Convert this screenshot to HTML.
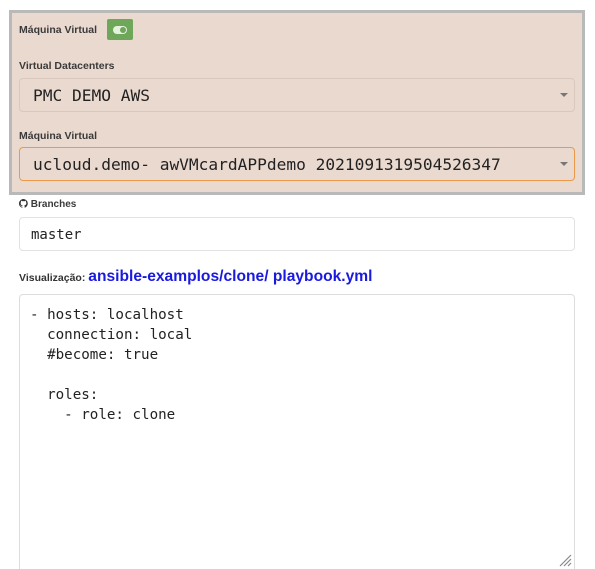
<!DOCTYPE html>
<html><head><meta charset="utf-8"><style>
*{box-sizing:border-box;margin:0;padding:0}
html,body{width:595px;height:569px;overflow:hidden}
body{background:#fff;font-family:"Liberation Sans",sans-serif;position:relative}
.panel{position:absolute;left:9px;top:10px;width:576px;height:185px;background:#ead9cf;border:3px solid #b9b9b9}
.lbl{position:absolute;font-size:10.5px;font-weight:bold;color:#3a3a3a}
.sel{position:absolute;left:19px;width:556px;height:34px;border:1px solid #d9c8bd;border-radius:4px;font-family:"DejaVu Sans Mono",monospace;font-size:16.2px;color:#222;padding-left:13px;line-height:33px}
.sel:after{content:"";position:absolute;right:6px;top:14px;border-left:4px solid transparent;border-right:4px solid transparent;border-top:4px solid #777}
.toggle{position:absolute;left:107px;top:19px;width:26px;height:21px;background:#6ea65a;border-radius:2px}
.toggle i{position:absolute;left:6px;top:7px;width:14px;height:8px;border-radius:4px;background:#e5f0de}
.toggle i:after{content:"";position:absolute;right:1px;top:1px;width:6px;height:6px;border-radius:3px;background:#6ea65a}
.inp{position:absolute;left:19px;top:217px;width:556px;height:34px;border:1px solid #e2e2e2;border-radius:4px;font-family:"DejaVu Sans Mono",monospace;font-size:14px;line-height:34px;padding-left:11px;color:#222}
.ta{position:absolute;left:19px;top:294px;width:556px;height:290px;border:1px solid #ddd;border-radius:4px;font-family:"DejaVu Sans Mono",monospace;font-size:14.2px;line-height:20px;padding:10px 10px;white-space:pre;color:#222}
</style></head><body>
<div class="panel"></div>
<div class="lbl" style="left:19px;top:24px">Máquina Virtual</div>
<div class="toggle"><i></i></div>
<div class="lbl" style="left:19px;top:60px">Virtual Datacenters</div>
<div class="sel" style="top:78px">PMC DEMO AWS</div>
<div class="lbl" style="left:19px;top:130px">Máquina Virtual</div>
<div class="sel" style="top:147px;border-color:#ec9a4a">ucloud.demo- awVMcardAPPdemo 2021091319504526347</div>
<div class="lbl" style="left:19px;top:199px;font-size:10px"><svg width="9" height="9" viewBox="0 0 16 16" style="vertical-align:-1px"><path fill="#333" d="M8 0a8 8 0 0 0-2.5 15.6c.4 0 .5-.2.5-.4v-1.5c-2.2.5-2.7-1-2.7-1-.4-.9-.9-1.2-.9-1.2-.7-.5.1-.5.1-.5.8.1 1.2.8 1.2.8.7 1.3 1.9.9 2.3.7.1-.5.3-.9.5-1.100-1.8-.2-3.6-.9-3.6-4 0-.9.3-1.6.8-2.1-.1-.2-.4-1 .1-2.1 0 0 .7-.2 2.2.8a7.5 7.5 0 0 1 4 0c1.5-1 2.2-.8 2.2-.8.4 1.1.2 1.9.1 2.1.5.6.8 1.3.8 2.1 0 3.1-1.900 3.7-3.6 3.9.3.3.5.8.5 1.5v2.2c0 .2.1.5.6.4A8 8 0 0 0 8 0z"/></svg> Branches</div>
<div class="inp">master</div>
<div style="position:absolute;left:19px;top:268px;font-size:10.5px;font-weight:bold;color:#333;white-space:nowrap">Visualização: <span style="font-size:15.6px;color:#1a1adf">ansible-examplos/clone/ playbook.yml</span></div>
<div class="ta">- hosts: localhost
  connection: local
  #become: true

  roles:
    - role: clone</div>
<svg style="position:absolute;left:558px;top:553px" width="14" height="14"><path d="M13 2L2 13M13 6L6 13M13 10L10 13" stroke="#888" stroke-width="1.2"/></svg>
</body></html>
